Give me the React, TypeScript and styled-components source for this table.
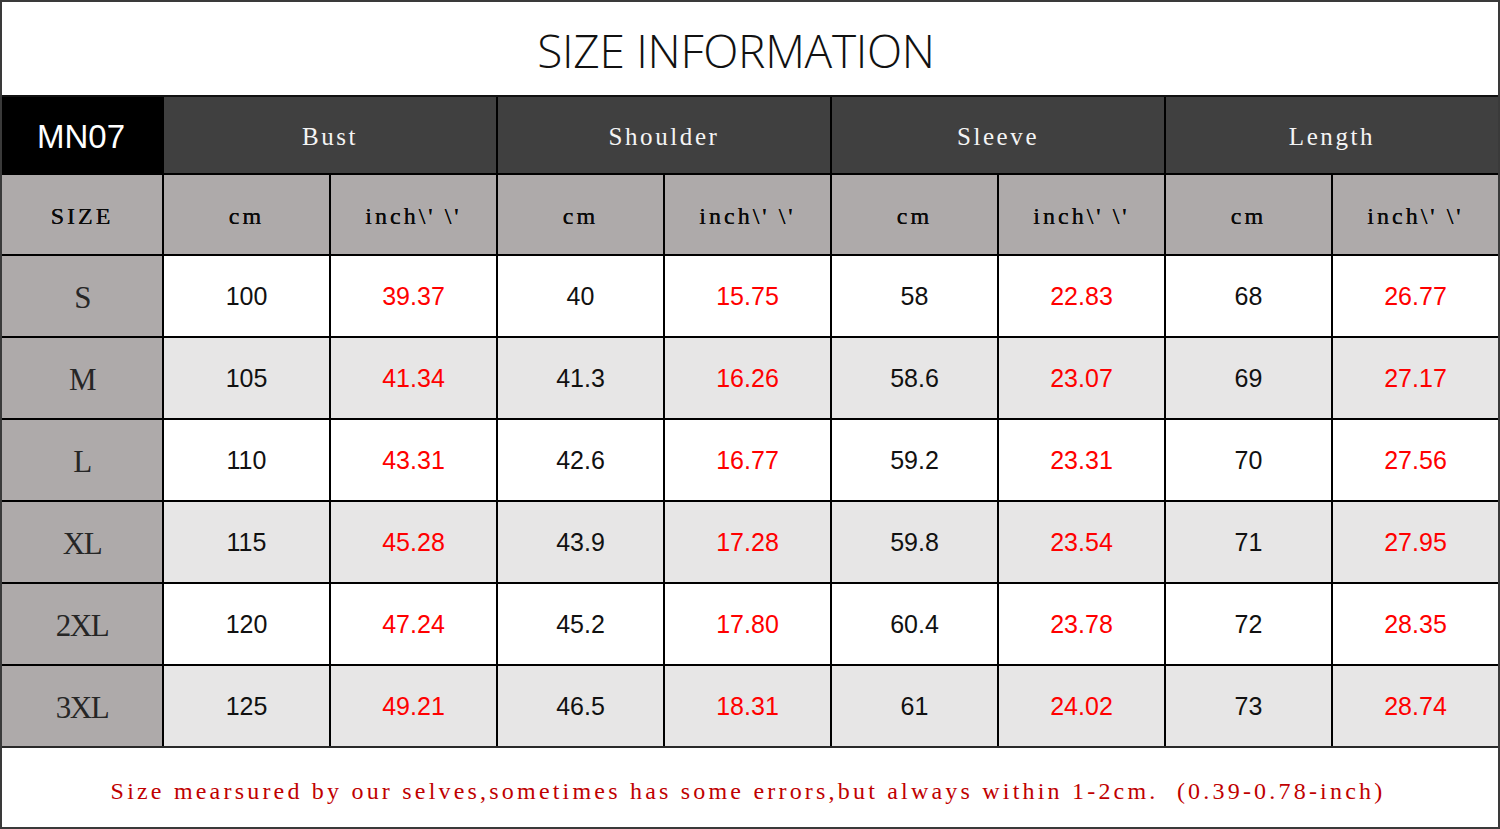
import React from "react";
import styled, { createGlobalStyle } from "styled-components";

const GlobalStyle = createGlobalStyle`
  html, body { margin: 0; padding: 0; background: #ffffff; }
  * { box-sizing: border-box; }
`;

const Page = styled.div`
  width: 1500px;
  height: 829px;
  border: 2px solid #3a3a3a;
  display: flex;
  flex-direction: column;
  background: #ffffff;
`;

const Title = styled.h1`
  margin: 0;
  height: 93px;
  display: flex;
  align-items: center;
  justify-content: center;
  padding-right: 28px;
  padding-top: 3px;
  font-family: "Open Sans", "Liberation Sans", sans-serif;
  font-weight: 300;
  font-size: 46px;
  color: #111111;
  letter-spacing: -0.3px;
`;

const Grid = styled.div`
  display: grid;
  grid-template-columns: 160px repeat(8, 1fr);
  grid-template-rows: 76px 79px repeat(6, 80px);
  gap: 2px;
  background: #000000;
  border-top: 2px solid #111111;
  border-bottom: 2px solid #2a2a2a;
`;

const Cell = styled.div<{ $bg?: string; $span?: number }>`
  display: flex;
  align-items: center;
  justify-content: center;
  background: ${(p) => p.$bg ?? "#ffffff"};
  grid-column: span ${(p) => p.$span ?? 1};
`;

const ModelCell = styled(Cell)`
  background: #000000;
  color: #ffffff;
  font-family: "Liberation Sans", Arial, sans-serif;
  font-size: 33px;
  padding-right: 2px;
  padding-top: 3px;
`;

const GroupHead = styled(Cell)`
  background: #404040;
  color: #f4f4f4;
  font-family: "Liberation Serif", "Times New Roman", serif;
  font-size: 25px;
  letter-spacing: 2.6px;
  padding-top: 3px;
`;

const SubHead = styled(Cell)`
  background: #aeaaaa;
  color: #0a0a0a;
  font-family: "Liberation Serif", "Times New Roman", serif;
  font-size: 24px;
  letter-spacing: 3px;
  padding-top: 3px;
  text-shadow: 0 0 0.4px #000;
`;

const SizeCell = styled(Cell)`
  background: #aeaaaa;
  color: #262626;
  font-family: "Liberation Serif", "Times New Roman", serif;
  font-size: 31px;
  letter-spacing: -1.5px;
  padding-top: 4px;
`;

const Value = styled(Cell)<{ $red?: boolean }>`
  font-family: "Liberation Sans", Arial, sans-serif;
  font-size: 25px;
  color: ${(p) => (p.$red ? "#ff0000" : "#111111")};
`;

const Footer = styled.div`
  flex: 1;
  display: flex;
  align-items: center;
  justify-content: center;
  padding-top: 8px;
  padding-right: 4px;
  font-family: "Liberation Serif", "Times New Roman", serif;
  font-size: 24px;
  letter-spacing: 3.2px;
  color: #c00000;
  white-space: pre;
`;

const groups = ["Bust", "Shoulder", "Sleeve", "Length"];

const rows: { size: string; vals: string[] }[] = [
  { size: "S", vals: ["100", "39.37", "40", "15.75", "58", "22.83", "68", "26.77"] },
  { size: "M", vals: ["105", "41.34", "41.3", "16.26", "58.6", "23.07", "69", "27.17"] },
  { size: "L", vals: ["110", "43.31", "42.6", "16.77", "59.2", "23.31", "70", "27.56"] },
  { size: "XL", vals: ["115", "45.28", "43.9", "17.28", "59.8", "23.54", "71", "27.95"] },
  { size: "2XL", vals: ["120", "47.24", "45.2", "17.80", "60.4", "23.78", "72", "28.35"] },
  { size: "3XL", vals: ["125", "49.21", "46.5", "18.31", "61", "24.02", "73", "28.74"] },
];

export default function App() {
  return (
    <>
      <GlobalStyle />
      <Page>
        <Title>SIZE INFORMATION</Title>
        <Grid>
          <ModelCell>MN07</ModelCell>
          {groups.map((g) => (
            <GroupHead key={g} $span={2}>
              {g}
            </GroupHead>
          ))}
          <SubHead>SIZE</SubHead>
          {groups.map((g) => (
            <React.Fragment key={g}>
              <SubHead>cm</SubHead>
              <SubHead>{"inch\\' \\'"}</SubHead>
            </React.Fragment>
          ))}
          {rows.map((r, i) => {
            const bg = i % 2 === 0 ? "#ffffff" : "#e7e6e6";
            return (
              <React.Fragment key={r.size}>
                <SizeCell>{r.size}</SizeCell>
                {r.vals.map((v, j) => (
                  <Value key={j} $bg={bg} $red={j % 2 === 1}>
                    {v}
                  </Value>
                ))}
              </React.Fragment>
            );
          })}
        </Grid>
        <Footer>
          Size mearsured by our selves,sometimes has some errors,but always within 1-2cm.  (0.39-0.78-inch)
        </Footer>
      </Page>
    </>
  );
}
